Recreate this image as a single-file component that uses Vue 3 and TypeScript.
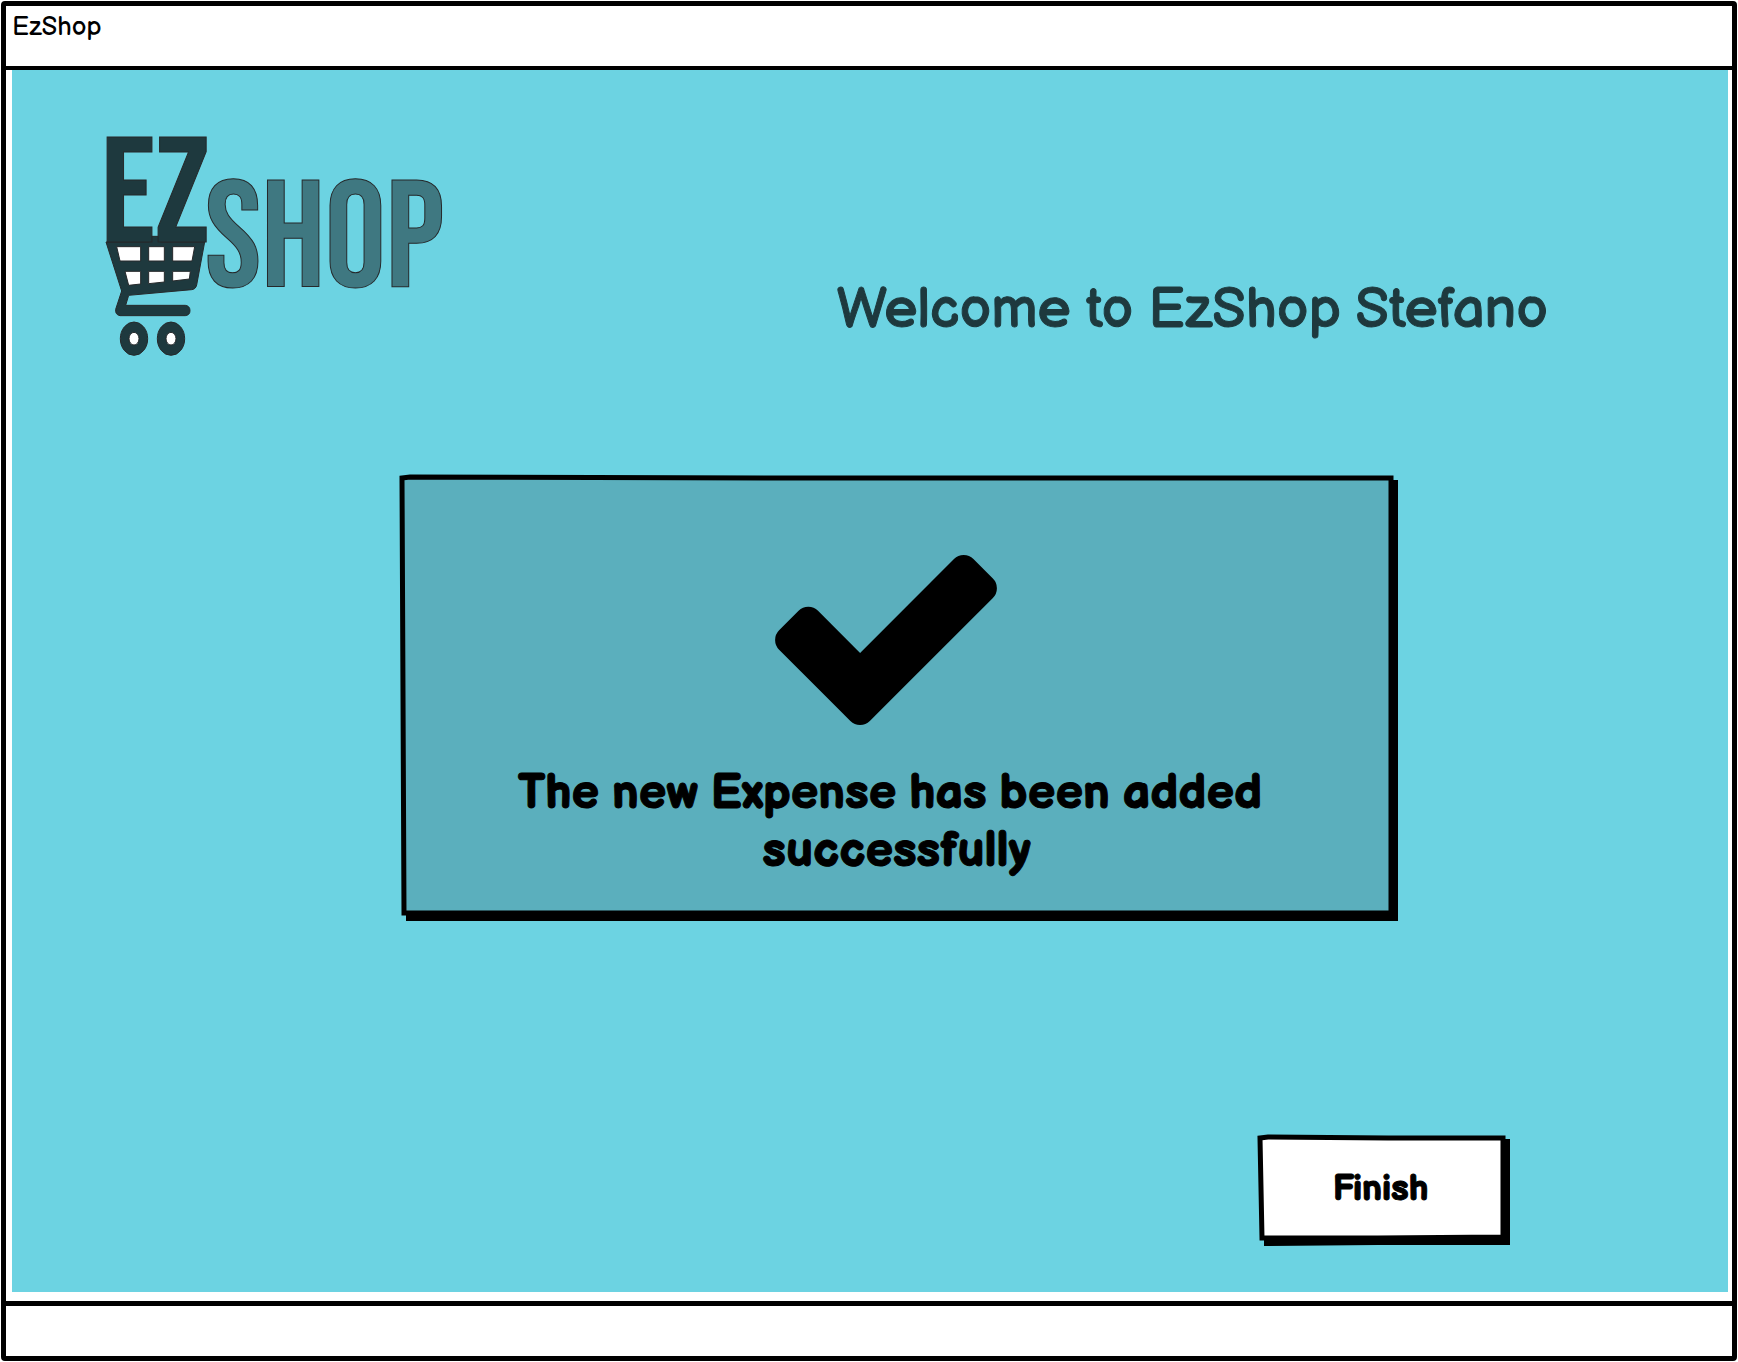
<script setup lang="ts">
import { ref } from 'vue'

const appName = 'EzShop'
const userName = ref('Stefano')
</script>

<template>
  <div class="window">
    <header class="titlebar">{{ appName }}</header>
    <div class="frame">
      <main class="screen">
        <div class="top">
          <svg class="logo" viewBox="45 42 1020 678" role="img" aria-label="EZ Shop">
            <g class="cart">
              <path d="M48 366 L178 366 178 349 212 349 212 366 344 366 320 495 Q317 508 305 509 L116 526 107 556 286 556 Q300 558 300 572 Q300 585 286 587 L90 587 Q75 584 77 568 L95 513 Z" />
              <ellipse cx="132" cy="656" rx="41" ry="50" />
              <ellipse cx="243" cy="656" rx="41" ry="50" />
            </g>
            <g class="holes">
              <path d="M80 380H152V423H90Z M176 380H223V423H176Z M248 380H314L306 423H248Z M105 454H152V492L116 496Z M176 454H223V486L176 491Z M248 454H301L298 477 248 483Z" />
              <ellipse cx="132" cy="656" rx="15" ry="19" />
              <ellipse cx="243" cy="656" rx="15" ry="19" />
            </g>
            <text class="dark" x="33" y="367">E</text>
            <text class="dark" x="196" y="367">Z</text>
            <text class="mid" x="344" y="499">SHOP</text>
          </svg>
          <h1>Welcome to {{ appName }} {{ userName }}</h1>
        </div>

        <section class="stage">
          <div class="card sketch" role="status">
            <svg class="outline" viewBox="0 0 993 441" preserveAspectRatio="none" aria-hidden="true">
              <path class="shade" d="M6 438 L990 438 990 5 998 5 998 446 6 446Z" />
              <path class="box tinted" d="M2 3 L10 2 400 3 991 3 991 438 500 438 4 438Z" />
            </svg>
            <svg class="check" viewBox="121 334 1550 1188" aria-hidden="true">
              <path d="M1671 566q0 40-28 68l-724 724-136 136q-28 28-68 28t-68-28l-136-136-362-362q-28-28-28-68t28-68l136-136q28-28 68-28t68 28l294 295 656-657q28-28 68-28t68 28l136 136q28 28 28 68z" />
            </svg>
            <p>The new Expense has been added&nbsp;<br />successfully</p>
          </div>
        </section>

        <button class="finish sketch" type="button">
          <svg class="outline" viewBox="0 0 247 106" preserveAspectRatio="none" aria-hidden="true">
            <path class="shade" d="M6 102 L244 102 244 4 252 4 252 110 120 110 6 111Z" />
            <path class="box plain" d="M2 3 L10 2 130 3 245 3 245 102 120 103 4 103Z" />
          </svg>
          <span>Finish</span>
        </button>
      </main>
    </div>
    <footer class="statusbar"></footer>
  </div>
</template>

<style>
body {
  margin: 0;
  background: #fff;
}
</style>

<style scoped>
.window {
  box-sizing: border-box;
  display: flex;
  flex-direction: column;
  min-height: calc(100vh - 2px);
  margin: 1px;
  border: 5px solid #000;
  border-radius: 4px;
  font-family: 'Balsamiq Sans', 'Comic Neue', Roboto, sans-serif;
  color: #000;
}

.titlebar {
  height: 60px;
  padding: 6px;
  box-sizing: border-box;
  font-size: 26px;
  line-height: 32px;
}

.frame {
  flex: 1;
  display: flex;
  padding: 0 4px 9px 6px;
  border-top: 4px solid #000;
}

.screen {
  flex: 1;
  display: flex;
  flex-direction: column;
  padding-top: 64px;
  background: #6cd3e2;
}

.top {
  display: flex;
  align-items: flex-end;
  justify-content: space-between;
  padding: 0 180px 0 93px;
}

.logo {
  width: 340px;
  height: 226px;
  flex: none;
  overflow: visible;
  stroke: #26292b;
  stroke-width: 3;
  font-family: 'Bebas Neue', 'Open Sans Condensed', 'Roboto Condensed', sans-serif;
  font-size: 456px;
}

.cart,
.dark {
  fill: #1e393e;
}

.dark {
  font-size: 448px;
}

.mid {
  fill: #3f7881;
}

.holes {
  fill: #fff;
}

h1 {
  margin: 0 0 15px;
  font-size: 56px;
  line-height: 68px;
  font-weight: 400;
  color: #1e393e;
  -webkit-text-stroke: 1px #1e393e;
}

.stage {
  display: grid;
  grid-template-columns: 388fr 993fr 335fr;
  margin-top: 115px;
}

.sketch {
  position: relative;
  isolation: isolate;
}

.outline {
  position: absolute;
  inset: 0;
  z-index: -1;
  width: 100%;
  height: 100%;
  overflow: visible;
}

.box {
  stroke: #000;
  stroke-width: 5;
}

.tinted {
  fill: #5bafbd;
}

.plain {
  fill: #fff;
}

.card {
  grid-column: 2;
  display: flex;
  flex-direction: column;
  align-items: center;
  padding: 80px 0 35px;
}

.check {
  width: 222px;
  height: 170px;
  margin-right: 22px;
}

.card p {
  margin: 40px 0 0;
  font-size: 48px;
  line-height: 58px;
  font-weight: 700;
  text-align: center;
  -webkit-text-stroke: 1px #000;
}

.finish {
  align-self: flex-end;
  width: 247px;
  height: 106px;
  margin: auto 223px 51px 0;
  padding: 4px 2px 0 0;
  border: 0;
  background: none;
  font: 700 36px/44px 'Balsamiq Sans', 'Comic Neue', Roboto, sans-serif;
  color: #000;
  -webkit-text-stroke: 1px #000;
  cursor: pointer;
}

.statusbar {
  height: 50px;
  border-top: 5px solid #000;
}
</style>
